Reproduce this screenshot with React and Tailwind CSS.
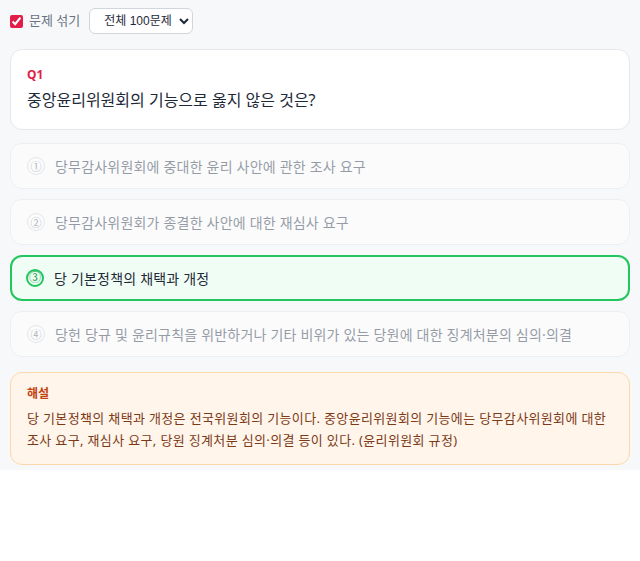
import { useState } from 'react';

const font = { fontFamily: '"Noto Sans", "Noto Sans CJK KR", sans-serif' };

const options = [
  { mark: '①', text: '당무감사위원회에 중대한 윤리 사안에 관한 조사 요구' },
  { mark: '②', text: '당무감사위원회가 종결한 사안에 대한 재심사 요구' },
  { mark: '③', text: '당 기본정책의 채택과 개정', answer: true },
  { mark: '④', text: '당헌 당규 및 윤리규칙을 위반하거나 기타 비위가 있는 당원에 대한 징계처분의 심의·의결' },
];

export default function App() {
  const [shuffle, setShuffle] = useState(true);

  return (
    <div className="bg-[#f7f8fa] px-[10px] pt-2 pb-[5px] text-gray-800" style={font}>
      <div className="flex items-center gap-[9px] h-[26px]">
        <label className="flex items-center gap-[6px] text-[13px] text-gray-500">
          <input
            type="checkbox"
            checked={shuffle}
            onChange={(e) => setShuffle(e.target.checked)}
            className="w-[13px] h-[13px] accent-[#e11d48]"
          />
          문제 섞기
        </label>
        <select
          className="h-[26px] rounded-md border border-gray-300 bg-white pl-[10px] pr-[4px] text-[12px] text-gray-800"
          style={{ fontFamily: '"Liberation Sans", "Noto Sans CJK KR", sans-serif' }}
        >
          <option>전체 100문제</option>
        </select>
      </div>

      <div className="mt-[15px] rounded-xl border border-gray-200 bg-white px-4 pt-[17px] pb-[17px]">
        <div className="text-[12px] font-bold leading-4 text-[#e11d48]">Q1</div>
        <div className="mt-[5px] text-[16px] leading-6 text-gray-800">중앙윤리위원회의 기능으로 옳지 않은 것은?</div>
      </div>

      <div className="mt-[13px] flex flex-col gap-[10px]">
        {options.map((o) =>
          o.answer ? (
            <div
              key={o.mark}
              className="flex h-[46px] items-center gap-[10px] rounded-xl border-2 border-[#22c55e] bg-[#f0fdf4] px-[14px]"
            >
              <span className="flex h-[18px] w-[18px] items-center justify-center rounded-full border-2 border-[#22c55e] text-[12px] leading-none text-[#16a34a]">
                {o.mark}
              </span>
              <span className="text-[14px] tracking-[0.2px] text-gray-800">{o.text}</span>
            </div>
          ) : (
            <div
              key={o.mark}
              className="flex h-[46px] items-center gap-[10px] rounded-xl border border-gray-200 bg-white px-4 opacity-50"
            >
              <span className="flex h-[18px] w-[18px] items-center justify-center rounded-full border border-gray-300 text-[11px] leading-none text-gray-500">
                {o.mark}
              </span>
              <span className="text-[14px] tracking-[0.2px] text-gray-700">{o.text}</span>
            </div>
          )
        )}
      </div>

      <div className="mt-[15px] rounded-xl border border-[#fed7aa] bg-[#fff5eb] px-4 pt-[13px] pb-[13px]">
        <div className="text-[12px] font-bold leading-4 text-[#c2410c]">해설</div>
        <p className="mt-[5px] break-keep text-[13px] tracking-[0.35px] leading-[22px] text-[#7c3a17]">
          당 기본정책의 채택과 개정은 전국위원회의 기능이다. 중앙윤리위원회의 기능에는 당무감사위원회에 대한 조사 요구, 재심사 요구, 당원 징계처분 심의·의결 등이 있다. (윤리위원회 규정)
        </p>
      </div>
    </div>
  );
}
